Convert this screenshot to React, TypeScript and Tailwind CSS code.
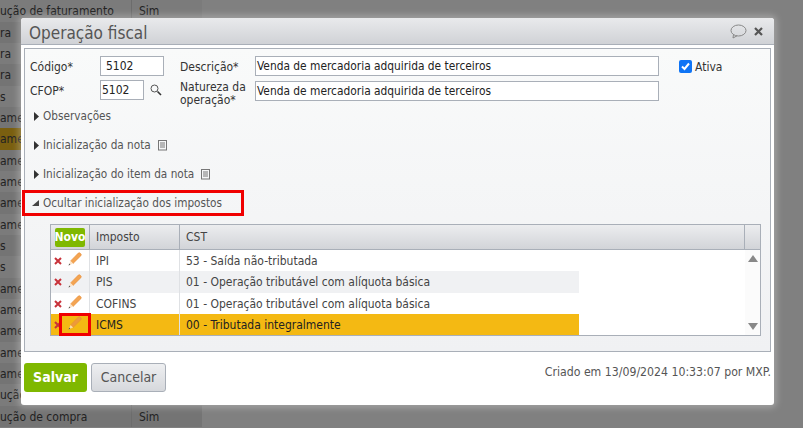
import React from "react";

function Note() {
  return (
    <svg width="10" height="11" viewBox="0 0 10 11" className="ml-[7px] mt-px shrink-0">
      <rect x="0.5" y="0.5" width="8" height="9.5" fill="none" stroke="#777" />
      <path d="M2 3h5M2 5h5M2 7h5" stroke="#777" />
    </svg>
  );
}

function Section({ open, label, note, cls }: { open?: boolean; label: string; note?: boolean; cls: string }) {
  return (
    <div className={`flex h-[16px] items-center text-[11.7px] text-[#555] ${cls}`}>
      {open ? (
        <svg width="8" height="6" viewBox="0 0 8 6" className="ml-[7px] mr-[3px]"><path d="M7 0v6H0z" fill="#444" /></svg>
      ) : (
        <svg width="5" height="9" viewBox="0 0 5 9" className="ml-[9px] mr-[4px]"><path d="M0 0l5 4.5L0 9z" fill="#333" /></svg>
      )}
      <span className="pt-[2px]">{label}</span>
      {note && <Note />}
    </div>
  );
}

function Pencil({ faded }: { faded?: boolean }) {
  const body = faded ? "#ec9a3a" : "#f3a452";
  const edge = faded ? "#e58e33" : "#e88c35";
  return (
    <svg width="14" height="14" viewBox="0 0 14 14" className="mb-[3px] shrink-0">
      <path d="M2.6 8.9L10.3 1.1a1.3 1.3 0 0 1 1.8 0l.8.8a1.3 1.3 0 0 1 0 1.8L5.1 11.4z" fill={body} stroke={edge} strokeWidth="0.6" />
      <path d="M2.6 8.9L0.5 13.5l4.6-2.1z" fill={faded ? "#fbdca6" : "#fde4c6"} />
      <path d="M0.5 13.5l.8-1.9 1.1 1.1z" fill="#555" />
    </svg>
  );
}

function Cross() {
  return (
    <svg width="8" height="8" viewBox="0 0 8 8" className="shrink-0">
      <path d="M1 1l6 6M7 1L1 7" stroke="#c8323a" strokeWidth="2" />
    </svg>
  );
}

const rows = [
  { tax: "IPI", cst: "53 - Saída não-tributada", bg: "bg-white", h: "h-[21px]" },
  { tax: "PIS", cst: "01 - Operação tributável com alíquota básica", bg: "bg-[#f0f1f3]", h: "h-[22px]" },
  { tax: "COFINS", cst: "01 - Operação tributável com alíquota básica", bg: "bg-white", h: "h-[21px]" },
  { tax: "ICMS", cst: "00 - Tributada integralmente", bg: "bg-[#f4b913]", h: "h-[21px]", sel: true },
];

const backRows = [
  ["h-[22px]", "ução de faturamento", "bg-[#7b7b7b]"],
  ["h-[21px]", "ra", "bg-[#747474]"],
  ["h-[21px]", "ra", "bg-[#7b7b7b]"],
  ["h-[22px]", "ra", "bg-[#747474]"],
  ["h-[21px]", "s", "bg-[#7b7b7b]"],
  ["h-[21px]", "ame", "bg-[#747474]"],
  ["h-[22px]", "ame", "bg-[#7a5f10]"],
  ["h-[21px]", "ame", "bg-[#747474]"],
  ["h-[21px]", "ame", "bg-[#7b7b7b]"],
  ["h-[22px]", "ame", "bg-[#747474]"],
  ["h-[21px]", "ame", "bg-[#7b7b7b]"],
  ["h-[21px]", "s", "bg-[#747474]"],
  ["h-[22px]", "s", "bg-[#7b7b7b]"],
  ["h-[21px]", "ame", "bg-[#747474]"],
  ["h-[21px]", "ame", "bg-[#7b7b7b]"],
  ["h-[22px]", "ame", "bg-[#747474]"],
  ["h-[21px]", "ame", "bg-[#7b7b7b]"],
  ["h-[21px]", "ame", "bg-[#747474]"],
  ["h-[22px]", "ução", "bg-[#7b7b7b]"],
  ["h-[21px]", "ução de compra", "bg-[#747474]"],
];

export default function App() {
  return (
    <div className="relative h-[428px] w-[803px] overflow-hidden bg-[#808080] font-['DejaVu_Sans',sans-serif] text-[12px] [font-stretch:condensed]">
      <div className="w-[202px] text-[#222]">
        {backRows.map(([h, t, bg], i) => (
          <div key={i} className={`flex items-center ${h} ${bg}`}>
            <div className="flex h-full w-[132px] items-center overflow-hidden whitespace-nowrap border-r border-[#6c6c6c]">{t}</div>
            {(i === 0 || i === 19) && <span className="pl-[7px]">Sim</span>}
          </div>
        ))}
      </div>

      <div className="absolute left-[21px] top-[18px] flex h-[387px] w-[753px] flex-col rounded-[3px] bg-white shadow-[0_0_6px_3px_rgba(255,255,255,0.25)]">
        <div className="flex h-[27px] shrink-0 items-center justify-between rounded-t-[3px] border-b border-[#a9afb8] bg-gradient-to-b from-[#e9eaec] to-[#d0d2d6] pl-[8px] pr-[11px]">
          <span className="pt-[3px] text-[17px] leading-[24px] text-[#555]">Operação fiscal</span>
          <div className="flex items-center gap-[7px]">
            <svg width="17" height="15" viewBox="0 0 17 15">
              <ellipse cx="8.5" cy="6.5" rx="7.5" ry="5.5" fill="none" stroke="#888" />
              <path d="M3.5 10.5L3 14l4-2.2" fill="none" stroke="#888" />
            </svg>
            <svg width="9" height="9" viewBox="0 0 9 9"><path d="M1 1l7 7M8 1L1 8" stroke="#555" strokeWidth="2.2" /></svg>
          </div>
        </div>

        <div className="mx-[3px] mt-[3px] flex h-[304px] flex-col border border-[#a9afb8] bg-gradient-to-b from-[#f9fafa] to-[#f0f1f3]">
          <div className="flex pl-[5px] pt-[7px] text-[#333]">
            <div className="flex w-[150px] flex-col">
              <div className="flex h-[20px] items-center">
                <span className="w-[70px] pt-[2px]">Código*</span>
                <div className="flex h-[20px] w-[64px] items-center border border-[#a9afb8] bg-white pl-[5px] text-[#222]">5102</div>
              </div>
              <div className="mt-[4px] flex h-[20px] items-center">
                <span className="w-[70px] pt-[2px]">CFOP*</span>
                <div className="flex h-[20px] w-[44px] items-center border border-[#a9afb8] bg-white pl-[1px] text-[#222]">5102</div>
                <svg width="12" height="12" viewBox="0 0 12 12" className="ml-[6px]">
                  <circle cx="4.5" cy="4.5" r="3.5" fill="none" stroke="#555" />
                  <path d="M7.5 7.5L11 11" stroke="#333" strokeWidth="1.6" />
                </svg>
              </div>
            </div>
            <div className="flex flex-col">
              <div className="flex h-[20px] items-center">
                <span className="w-[75px] pt-[2px]">Descrição*</span>
                <div className="flex h-[20px] w-[404px] items-center border border-[#a9afb8] bg-white pl-[1px] pt-[2px] text-[11.85px] text-[#222]">Venda de mercadoria adquirida de terceiros</div>
              </div>
              <div className="mt-[5px] flex h-[20px] items-center">
                <span className="w-[75px] pt-[6px] leading-[13px]">Natureza da operação*</span>
                <div className="flex h-[20px] w-[404px] items-center border border-[#a9afb8] bg-white pl-[1px] pt-[2px] text-[11.85px] text-[#222]">Venda de mercadoria adquirida de terceiros</div>
              </div>
            </div>
            <div className="ml-[20px] flex h-[20px] items-center">
              <span className="flex h-[13px] w-[13px] items-center justify-center rounded-[2px] bg-[#0f74f5]">
                <svg width="11" height="11" viewBox="0 0 11 11"><path d="M2 5.5l2.5 2.5L9 2.5" fill="none" stroke="#fff" strokeWidth="2" /></svg>
              </span>
              <span className="ml-[3px] pt-[2px]">Ativa</span>
            </div>
          </div>

          <Section label="Observações" cls="mt-[7px]" />
          <Section label="Inicialização da nota" note cls="mt-[13px]" />
          <Section label="Inicialização do item da nota" note cls="mt-[13px]" />
          <div className="relative mt-[13px]">
            <Section open label="Ocultar inicialização dos impostos" cls="" />
            <div className="absolute left-[-3px] top-[-5px] h-[26px] w-[222px] border-[3px] border-[#f00000]" />
          </div>

          <div className="ml-[25px] mt-[13px] flex h-[112px] w-[711px] flex-col border border-[#a9afb8] bg-white text-[#444]">
            <div className="flex h-[25px] shrink-0 border-b border-[#a9afb8] bg-gradient-to-b from-[#ecedef] to-[#d2d4d8]">
              <div className="flex w-[39px] items-center justify-center border-r border-[#a9afb8]">
                <span className="flex h-[19px] w-[30px] items-center justify-center rounded-[2px] bg-[#7fb800] text-[12px] font-bold text-white">Novo</span>
              </div>
              <div className="flex w-[90px] items-center border-r border-[#a9afb8] pl-[6px]">Imposto</div>
              <div className="flex flex-1 items-center border-r border-[#a9afb8] pl-[6px]">CST</div>
              <div className="w-[15px]" />
            </div>
            <div className="flex flex-1">
              <div className="flex-1">
                <div className="w-[528px]">
                  {rows.map((r) => (
                    <div key={r.tax} className={`flex ${r.h} ${r.bg} ${r.sel ? "text-[#222]" : ""}`}>
                      <div className="flex w-[39px] items-center gap-[6px] border-r border-[#dfe1e4] pl-[3px]">
                        <Cross />
                        <Pencil faded={r.sel} />
                      </div>
                      <div className="flex w-[90px] items-center border-r border-[#dfe1e4] pl-[6px]">{r.tax}</div>
                      <div className="flex flex-1 items-center pl-[6px]">{r.cst}</div>
                    </div>
                  ))}
                </div>
              </div>
              <div className="flex w-[15px] flex-col items-center justify-between bg-[#fbfbfb] py-[5px]">
                <svg width="10" height="7" viewBox="0 0 10 7"><path d="M5 0l5 7H0z" fill="#888" /></svg>
                <svg width="10" height="7" viewBox="0 0 10 7"><path d="M5 7L0 0h10z" fill="#888" /></svg>
              </div>
            </div>
          </div>
        </div>

        <div className="mx-[3px] mt-[11px] flex items-start justify-between">
          <div className="flex gap-[4px]">
            <span className="flex h-[29px] w-[63px] items-center justify-center rounded-[3px] bg-[#7fb800] text-[14px] font-bold text-white">Salvar</span>
            <span className="flex h-[29px] w-[75px] items-center justify-center rounded-[3px] border border-[#a9afb8] bg-gradient-to-b from-[#eeeff1] to-[#d6d8dc] text-[14px] text-[#555]">Cancelar</span>
          </div>
          <span className="text-[12.2px] text-[#555]">Criado em 13/09/2024 10:33:07 por MXP.</span>
        </div>
      </div>

      <div className="absolute left-[59px] top-[313px] h-[23px] w-[32px] border-[3px] border-[#f00000]" />
    </div>
  );
}
